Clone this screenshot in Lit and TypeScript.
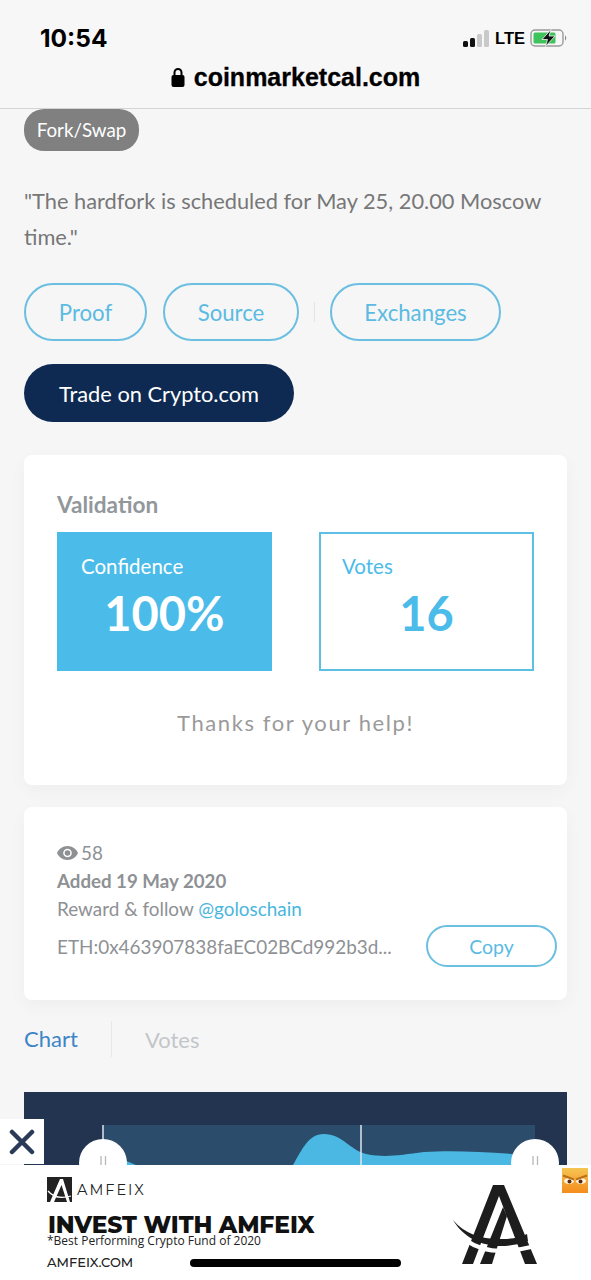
import { LitElement, html, css, svg } from "lit";
import { customElement } from "lit/decorators.js";

const aLogo = (c = "#1d1d1d") => svg`
  <path d="M40 0H51L84 79H72L46 11 20 79H9z" fill="${c}"/>
  <path d="M50 22L54 31 39 79H27z" fill="${c}"/>
  <path d="M14 56C28 66 50 69 78 62" fill="none" stroke="#fff" stroke-width="4"/>
  <path d="M0 35C12 50 32 55 50 54C60 54 68 52 74 49L75 56C64 60 55 61 48 61C28 61 10 52 0 35z" fill="${c}"/>`;

@customElement("app-root")
export class AppRoot extends LitElement {
  static styles = css`
    :host { display: block; width: 591px; height: 1280px; position: relative; overflow: hidden;
      background: #f6f6f7; font-family: Lato, "Open Sans", sans-serif; color: #777; }
    .top { height: 109px; box-sizing: border-box; background: #f7f7f7; border-bottom: 1px solid #d3d3d6;
      padding: 25px 24px 0 40px; display: flex; flex-direction: column; font-family: Inter, "Liberation Sans", sans-serif; color: #000; }
    .status { display: flex; justify-content: space-between; align-items: center; height: 26px; }
    .time { font-size: 24.500px; font-weight: 700; line-height: 26px; }
    .sys { display: flex; align-items: center; gap: 5px; font-size: 16.500px; font-weight: 700; font-family: "Liberation Sans", sans-serif; }
    .url { display: flex; justify-content: center; align-items: center; gap: 9px; margin: 13px 0 0 -16px; font-weight: 700; line-height: 26px; font-family: "Liberation Sans", sans-serif; }
    .url span { font-size: 25px; -webkit-text-stroke: .3px #000; }
    main { padding: 0 24px; display: flex; flex-direction: column; align-items: stretch; }
    .tag { align-self: flex-start; width: 115px; height: 42px; box-sizing: border-box; text-align: center; background: #808080; color: #fff;
      border-radius: 20px; font-size: 18.800px; line-height: 42px; }
    .quote { margin: 32px 0 0; font-size: 21.800px; line-height: 36px; color: #777; }
    .btns { display: flex; align-items: center; margin-top: 28px; }
    .btn { height: 58px; box-sizing: border-box; border: 2px solid #6cbfe0; border-radius: 29px; color: #5bbbe2;
      font-size: 22.200px; display: flex; align-items: center; justify-content: center; }
    .proof { width: 123px; }
    .source { width: 136px; margin-left: 16px; }
    .vline { width: 1px; height: 20px; background: #e2e3e5; margin: 0 15px; }
    .exch { width: 171px; }
    .trade { align-self: flex-start; width: 270px; height: 58px; margin-top: 23px; border-radius: 29px; background: #0e2a52; color: #fff;
      font-size: 21.800px; display: flex; align-items: center; justify-content: center; }
    .card { background: #fff; border-radius: 8px; box-shadow: 0 6px 18px rgba(0,0,0,.035); box-sizing: border-box; }
    .val { margin-top: 33px; height: 330px; padding: 36px 33px 0; }
    .val h3 { margin: 0; font-size: 22.600px; line-height: 28px; font-weight: 700; color: #92979c; }
    .boxes { display: flex; justify-content: space-between; margin-top: 13px; }
    .box { width: 215px; height: 139px; box-sizing: border-box; padding: 21px 24px 0; font-size: 20.500px; line-height: 26px; }
    .box.a { background: #4bbbe9; color: #fff; }
    .box.b { border: 2px solid #5cc0e4; color: #4bbbe9; padding: 19px 21px 0; }
    .num { margin-left: -24px; margin-right: -24px; text-align: center; font-size: 47px; font-weight: 700; line-height: 52px; margin-top: 8px; }
    .box.b .num { margin-left: -21px; margin-right: -21px; }
    .thanks { text-align: center; margin-top: 38px; font-size: 22px; line-height: 28px; letter-spacing: 1.600px; color: #9a9a9a; }
    .meta { margin-top: 22px; height: 193px; padding: 32px 10px 0 33px; color: #8e9194; font-size: 18.900px; }
    .row { line-height: 28px; height: 28px; white-space: nowrap; }
    .views { display: flex; align-items: center; gap: 3px; }
    .bold { font-weight: 700; font-size: 18.700px; }
    .link { color: #4bb6de; }
    .eth { display: flex; justify-content: space-between; align-items: center; margin-top: 2px; }
    .copy { width: 131px; height: 42px; font-size: 19.500px; border-radius: 21px; }
    .tabs { display: flex; align-items: center; height: 36px; margin-top: 21px; font-size: 22px; }
    .chart-t { color: #3d85c6; width: 87px; height: 100%; line-height: 36px; border-right: 1px solid #e8e9eb; }
    .votes-t { color: #c3c6c9; margin-left: 33px; }
    .chart { display: block; margin-top: 35px; width: 543px; height: 180px; }
    .close { position: absolute; left: 0; top: 1119px; width: 44px; height: 45px; background: #fff; display: flex; align-items: center; justify-content: center; }
    .ad { position: absolute; left: 0; right: 0; bottom: 0; height: 115px; background: #fff; box-sizing: border-box;
      padding: 12px 0 0 47px; color: #111; font-family: Montserrat, Inter, "Open Sans", sans-serif; }
    .brand { display: flex; align-items: center; gap: 5px; height: 25px; }
    .brand span { font-size: 14.500px; font-weight: 400; letter-spacing: 2px; color: #222; }
    .head { margin: 12px 0 0 1px; font-size: 23.400px; font-weight: 800; line-height: 22px; letter-spacing: -.1px; color: #111; }
    .sub { font-family: "Open Sans", sans-serif; font-size: 12px; line-height: 10px; color: #222; }
    .site { font-size: 13px; font-weight: 500; line-height: 18px; margin-top: 7px; color: #222; }
    .biglogo { position: absolute; left: 453px; top: 20px; }
    .emoji { position: absolute; left: 562px; top: 3px; }
    .home { position: absolute; left: 190px; top: 94px; width: 211px; height: 8px; border-radius: 4px; background: #000; }
  `;

  render() {
    return html`
      <header class="top">
        <div class="status">
          <div class="time">10:54</div>
          <div class="sys">
            <svg width="27" height="17" viewBox="0 0 27 17">
              <rect x="0" y="11" width="5" height="6" rx="1.500" fill="#111"/>
              <rect x="7" y="8" width="5" height="9" rx="1.500" fill="#111"/>
              <rect x="14" y="4" width="5" height="13" rx="1.500" fill="#c9c9c9"/>
              <rect x="21" y="0" width="5" height="17" rx="1.500" fill="#c9c9c9"/>
            </svg>
            <span>LTE</span>
            <svg width="37" height="18" viewBox="0 0 37 18">
              <rect x="1" y="1" width="32" height="16" rx="4" fill="none" stroke="#9a9a9a" stroke-width="1.400"/>
              <rect x="3.500" y="3.500" width="22" height="11" rx="1.500" fill="#3fc35c"/>
              <path d="M35 6.500c1.600.6 1.600 4.400 0 5z" fill="#8a8a8a"/>
              <path d="M21 0.500L12 10.500h5.500l-2 7L25 7h-6z" fill="#111" stroke="#f7f7f7" stroke-width=".8"/>
            </svg>
          </div>
        </div>
        <div class="url">
          <svg width="14" height="20" viewBox="0 0 14 20">
            <path d="M3.500 9V5.500a3.500 3.500 0 0 1 7 0V9" fill="none" stroke="#000" stroke-width="2"/>
            <rect x="0.500" y="8" width="13" height="12" rx="2" fill="#000"/>
          </svg>
          <span>coinmarketcal.com</span>
        </div>
      </header>

      <main>
        <div class="tag">Fork/Swap</div>
        <p class="quote">"The hardfork is scheduled for May 25, 20.00 Moscow time."</p>
        <div class="btns">
          <div class="btn proof">Proof</div>
          <div class="btn source">Source</div>
          <div class="vline"></div>
          <div class="btn exch">Exchanges</div>
        </div>
        <div class="trade">Trade on Crypto.com</div>

        <section class="card val">
          <h3>Validation</h3>
          <div class="boxes">
            <div class="box a">Confidence<div class="num">100%</div></div>
            <div class="box b">Votes<div class="num">16</div></div>
          </div>
          <div class="thanks">Thanks for your help!</div>
        </section>

        <section class="card meta">
          <div class="row views">
            <svg width="21" height="14" viewBox="0 0 21 14">
              <path d="M10.500 0C5.500 0 1.800 3 0 7c1.800 4 5.500 7 10.500 7S19.200 11 21 7C19.200 3 15.500 0 10.500 0z" fill="#8e9194"/>
              <circle cx="10.500" cy="7" r="4.300" fill="#fff"/>
              <circle cx="10.500" cy="7" r="2.800" fill="#8e9194"/>
            </svg>
            <span>58</span>
          </div>
          <div class="row bold">Added 19 May 2020</div>
          <div class="row">Reward &amp; follow <span class="link">@goloschain</span></div>
          <div class="eth">
            <span>ETH:0x463907838faEC02BCd992b3d...</span>
            <div class="btn copy">Copy</div>
          </div>
        </section>

        <nav class="tabs">
          <div class="chart-t">Chart</div>
          <div class="votes-t">Votes</div>
        </nav>

        <svg class="chart" viewBox="0 0 543 180">
          <rect width="543" height="180" fill="#22344f"/>
          <rect x="79" y="33" width="432" height="147" fill="#2b4c6b"/>
          <path d="M100 180V68L112 73H269C278 58 284 42 300 42C318 42 326 58 342 62C362 66 376 63 400 60C430 58 470 60 511 64V180z" fill="#4bb8e4"/>
          <path d="M337 33V180" stroke="#dfe6ec" stroke-width="1.500"/>
          <path d="M79 33V60" stroke="#dfe6ec" stroke-width="1.500"/>
          <circle cx="79" cy="71" r="24" fill="#fff"/>
          <circle cx="511" cy="71" r="24" fill="#fff"/>
          <path d="M77 64V74M81.500 64V74M509 64V74M513.500 64V74" stroke="#b5b8bb" stroke-width="1.300"/>
        </svg>
      </main>

      <div class="close">
        <svg width="26" height="26" viewBox="0 0 26 26">
          <path d="M3 3L23 23M23 3L3 23" stroke="#2b3a58" stroke-width="4.500" stroke-linecap="round"/>
        </svg>
      </div>

      <aside class="ad">
        <div class="brand">
          <svg width="25" height="25" viewBox="0 0 25 25">
            <rect width="25" height="25" fill="#222"/>
            <path d="M3 25L13 2h3l7 23h-3L14.500 8 7 25z" fill="#fff"/>
            <path d="M1 14C6 20 14 22 24 19" fill="none" stroke="#fff" stroke-width="1.300"/>
          </svg>
          <span>AMFEIX</span>
        </div>
        <div class="head">INVEST WITH AMFEIX</div>
        <div class="sub">*Best Performing Crypto Fund of 2020</div>
        <div class="site">AMFEIX.COM</div>
        <svg class="biglogo" width="84" height="80" viewBox="0 0 84 80">${aLogo()}</svg>
        <svg class="emoji" width="26" height="25" viewBox="0 0 26 25">
          <defs><linearGradient id="g" x1="0" y1="0" x2="0" y2="1"><stop offset="0" stop-color="#f6c552"/><stop offset="1" stop-color="#f48c1c"/></linearGradient></defs>
          <rect width="26" height="25" fill="url(#g)"/>
          <ellipse cx="7" cy="13" rx="5" ry="3" fill="#fff4dc"/>
          <ellipse cx="19" cy="13" rx="5" ry="3" fill="#fff4dc"/>
          <circle cx="7.500" cy="13.500" r="2" fill="#5a2a10"/>
          <circle cx="18.500" cy="13.500" r="2" fill="#5a2a10"/>
          <path d="M1 7.500L12 11.500M25 7.500L14 11.500" stroke="#b8701c" stroke-width="2"/>
        </svg>
        <div class="home"></div>
      </aside>
    `;
  }
}
